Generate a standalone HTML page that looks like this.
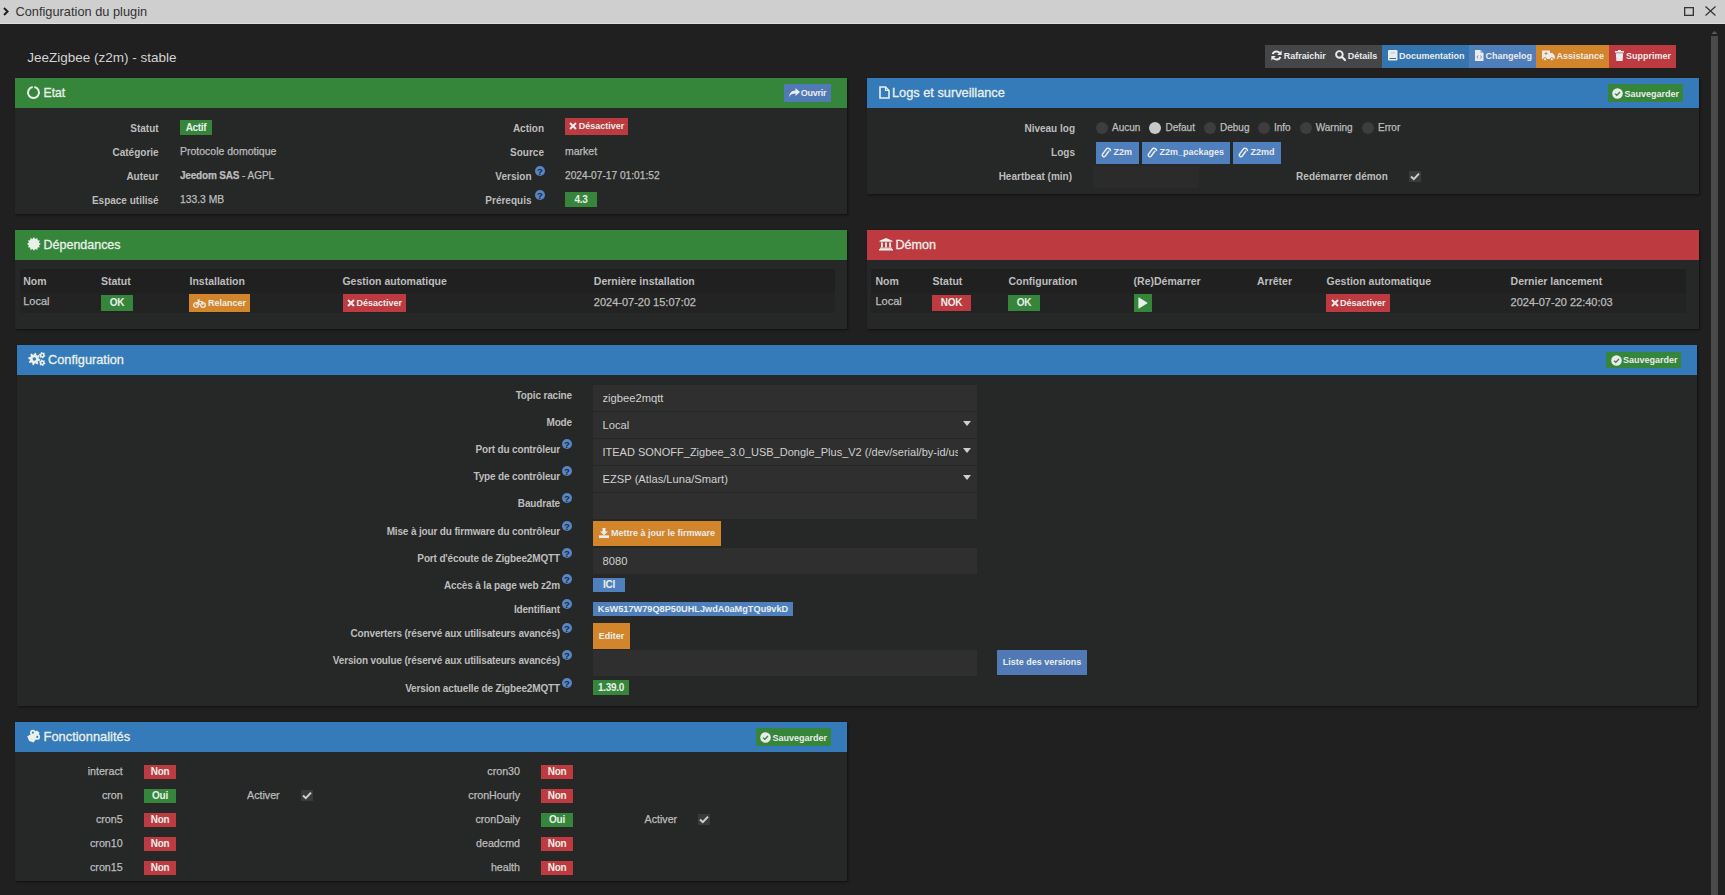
<!DOCTYPE html>
<html><head><meta charset="utf-8">
<style>
*{box-sizing:border-box;margin:0;padding:0}
html,body{width:1725px;height:895px;overflow:hidden;background:#202020;font-family:"Liberation Sans",sans-serif}
.t{position:absolute;white-space:nowrap;line-height:normal}
.r{position:absolute}
svg.r{display:block;overflow:visible}
</style></head><body>
<div class="r" style="left:0px;top:0px;width:1725px;height:23px;background:#cfcfcf;"></div>
<div class="r" style="left:0px;top:23px;width:1725px;height:1px;background:#dedede;"></div>
<svg class="r" style="left:3px;top:7px" width="6" height="9" viewBox="0 0 6 9"><path d="M1 1 L4.6 4.5 L1 8" stroke="#1e1e1e" stroke-width="1.9" fill="none"/></svg>
<div class="t" style="top:4.00px;font-size:12.8px;color:#333;left:15.5px;">Configuration du plugin</div>
<svg class="r" style="left:1684px;top:7px" width="10" height="9" viewBox="0 0 10 9"><rect x="0.65" y="0.65" width="8.7" height="7.7" stroke="#333" stroke-width="1.3" fill="none"/></svg>
<svg class="r" style="left:1705px;top:6px" width="11" height="10" viewBox="0 0 11 10"><path d="M0.5 0.5 L10.5 9.5 M10.5 0.5 L0.5 9.5" stroke="#333" stroke-width="1.2"/></svg>
<div class="r" style="left:1711px;top:36px;width:7px;height:859px;background:#4a4a4a;"></div>
<svg class="r" style="left:1711px;top:30px" width="7" height="4" viewBox="0 0 7 4"><path d="M0.5 4 L3.5 1 L6.5 4Z" fill="#5a5a5a"/></svg>
<div class="t" style="top:50.00px;font-size:13.5px;color:#d2d2d2;left:27.3px;">JeeZigbee (z2m) - stable</div>
<div class="r" style="left:1265px;top:45px;width:117px;height:23px;background:#454648;"></div>
<div class="r" style="left:1382px;top:45px;width:87px;height:23px;background:#3475b0;"></div>
<div class="r" style="left:1469px;top:45px;width:67px;height:23px;background:#4f7fba;"></div>
<div class="r" style="left:1536px;top:45px;width:73px;height:23px;background:#d3852b;"></div>
<div class="r" style="left:1609px;top:45px;width:67px;height:23px;background:#bc3a40;"></div>
<div class="t" style="top:51.00px;font-size:9px;color:#ebebeb;font-weight:700;left:1283.8px;">Rafraichir</div>
<div class="t" style="top:51.00px;font-size:9px;color:#ebebeb;font-weight:700;left:1347.8px;">Détails</div>
<div class="t" style="top:51.00px;font-size:9px;color:#ebebeb;font-weight:700;left:1399px;">Documentation</div>
<div class="t" style="top:51.00px;font-size:9px;color:#ebebeb;font-weight:700;left:1485.5px;">Changelog</div>
<div class="t" style="top:51.00px;font-size:9px;color:#ebebeb;font-weight:700;left:1556.6px;">Assistance</div>
<div class="t" style="top:51.00px;font-size:9px;color:#ebebeb;font-weight:700;left:1626px;">Supprimer</div>
<svg class="r" style="left:1271px;top:50px" width="11" height="11" viewBox="0 0 11 11"><path d="M9.2 3.6 A4.2 4.2 0 0 0 1.6 4.2" stroke="#ebebeb" stroke-width="1.9" fill="none"/><path d="M10.6 0.6 L10.6 5 L6.2 5Z" fill="#ebebeb"/><path d="M1.8 7.4 A4.2 4.2 0 0 0 9.4 6.8" stroke="#ebebeb" stroke-width="1.9" fill="none"/><path d="M0.4 10.4 L0.4 6 L4.8 6Z" fill="#ebebeb"/></svg>
<svg class="r" style="left:1335px;top:50px" width="11" height="11" viewBox="0 0 11 11"><circle cx="4.4" cy="4.4" r="3.3" stroke="#ebebeb" stroke-width="1.9" fill="none"/><path d="M6.8 6.8 L10 10" stroke="#ebebeb" stroke-width="2.2" stroke-linecap="round"/></svg>
<svg class="r" style="left:1388px;top:50px" width="10" height="11" viewBox="0 0 10 11"><rect x="0" y="0" width="9.5" height="10.5" rx="1" fill="#ebebeb"/><rect x="1.5" y="8" width="6.5" height="1" fill="#3475b0"/><rect x="3" y="2.5" width="4" height="0.8" fill="#3475b0" opacity=".4"/></svg>
<svg class="r" style="left:1475px;top:50px" width="9" height="11" viewBox="0 0 9 11"><path d="M0 0 H5.5 L8.5 3 V11 H0Z" fill="#ebebeb"/><path d="M5.5 0 V3 H8.5" fill="#4f7fba" opacity=".5"/><path d="M3 5.5 L2 7 L3 8.5 M5.5 5.5 L6.5 7 L5.5 8.5" stroke="#4f7fba" stroke-width=".8" fill="none"/></svg>
<svg class="r" style="left:1542px;top:50px" width="13" height="11" viewBox="0 0 13 11"><path d="M0 0.5 H8 V3 H10.5 L12.8 5.8 V9 H0Z" fill="#ebebeb"/><circle cx="3" cy="9.2" r="1.6" fill="#ebebeb" stroke="#d3852b" stroke-width=".9"/><circle cx="9.8" cy="9.2" r="1.6" fill="#ebebeb" stroke="#d3852b" stroke-width=".9"/><path d="M4 2 V5 M2.5 3.5 H5.5" stroke="#d3852b" stroke-width="1"/></svg>
<svg class="r" style="left:1615px;top:50px" width="9" height="11" viewBox="0 0 9 11"><rect x="0" y="1" width="9" height="1.6" fill="#ebebeb"/><rect x="3" y="0" width="3" height="1.5" fill="#ebebeb"/><path d="M0.8 3.2 H8.2 L7.6 11 H1.4Z" fill="#ebebeb"/></svg>
<div class="r" style="left:15px;top:78px;width:832px;height:136px;background:#262727;box-shadow:1px 1px 2px rgba(0,0,0,.5)"></div>
<div class="r" style="left:15px;top:78px;width:832px;height:30px;background:#35853b;"></div>
<div class="r" style="left:867px;top:78px;width:832px;height:116px;background:#262727;box-shadow:1px 1px 2px rgba(0,0,0,.5)"></div>
<div class="r" style="left:867px;top:78px;width:832px;height:30px;background:#357ab9;"></div>
<div class="r" style="left:15px;top:230px;width:832px;height:99px;background:#262727;box-shadow:1px 1px 2px rgba(0,0,0,.5)"></div>
<div class="r" style="left:15px;top:230px;width:832px;height:30px;background:#35853b;"></div>
<div class="r" style="left:867px;top:230px;width:832px;height:99px;background:#262727;box-shadow:1px 1px 2px rgba(0,0,0,.5)"></div>
<div class="r" style="left:867px;top:230px;width:832px;height:30px;background:#bc3a40;"></div>
<div class="r" style="left:17px;top:345px;width:1680px;height:361px;background:#262727;box-shadow:1px 1px 2px rgba(0,0,0,.5)"></div>
<div class="r" style="left:17px;top:345px;width:1680px;height:30px;background:#357ab9;"></div>
<div class="r" style="left:15px;top:722px;width:832px;height:159px;background:#262727;box-shadow:1px 1px 2px rgba(0,0,0,.5)"></div>
<div class="r" style="left:15px;top:722px;width:832px;height:30px;background:#357ab9;"></div>
<div class="t" style="top:86.00px;font-size:12.2px;color:#e9f0ea;left:43.5px;-webkit-text-stroke:0.3px #e9f0ea">Etat</div>
<svg class="r" style="left:27px;top:86px" width="13" height="13" viewBox="0 0 13 13"><path d="M7.3 1.05 A5.5 5.5 0 1 1 5.7 1.05" stroke="#e9f0ea" stroke-width="2" fill="none"/></svg>
<div class="r" style="left:784px;top:84px;width:47px;height:18px;background:#5079b5;"></div>
<svg class="r" style="left:789px;top:88px" width="11" height="9" viewBox="0 0 11 9"><path d="M6.5 0 L11 4 L6.5 8 V5.6 C3.5 5.6 1.5 6.5 0 9 C0.3 5 2.5 2.6 6.5 2.4Z" fill="#ebebeb"/></svg>
<div class="t" style="top:88.00px;font-size:9px;color:#ebebeb;font-weight:700;letter-spacing:-0.25px;left:800.8px;">Ouvrir</div>
<div class="t" style="top:123.00px;font-size:10px;color:#bdbdbd;font-weight:700;right:1566.4px;">Statut</div>
<div class="t" style="top:147.00px;font-size:10px;color:#bdbdbd;font-weight:700;right:1566.4px;">Catégorie</div>
<div class="t" style="top:171.00px;font-size:10px;color:#bdbdbd;font-weight:700;right:1566.4px;">Auteur</div>
<div class="t" style="top:195.00px;font-size:10px;color:#bdbdbd;font-weight:700;right:1566.4px;">Espace utilisé</div>
<div class="r" style="left:180px;top:120px;width:32px;height:15px;background:#35853b;"></div>
<div class="t" style="left:180px;width:32px;text-align:center;top:122px;font-size:10px;font-weight:700;color:#e9f0ea;letter-spacing:-0.3px;">Actif</div>
<div class="t" style="top:145.00px;font-size:10.5px;color:#bcbcbc;-webkit-text-stroke:0.25px #bcbcbc;left:180px;">Protocole domotique</div>
<div class="t" style="top:170.00px;font-size:10px;color:#bcbcbc;-webkit-text-stroke:0.25px #bcbcbc;left:180px;"><b style="letter-spacing:-0.2px">Jeedom SAS</b> - AGPL</div>
<div class="t" style="top:194.00px;font-size:10.3px;color:#bcbcbc;-webkit-text-stroke:0.25px #bcbcbc;left:180px;">133.3 MB</div>
<div class="t" style="top:123.00px;font-size:10px;color:#bdbdbd;font-weight:700;right:1181px;">Action</div>
<div class="t" style="top:147.00px;font-size:10px;color:#bdbdbd;font-weight:700;right:1181px;">Source</div>
<div class="t" style="top:171.00px;font-size:10px;color:#bdbdbd;font-weight:700;right:1193.5px;">Version</div>
<div class="t" style="top:195.00px;font-size:10px;color:#bdbdbd;font-weight:700;right:1193.5px;">Prérequis</div>
<svg class="r" style="left:535px;top:166px" width="10" height="10" viewBox="0 0 10 10"><circle cx="5" cy="5" r="5" fill="#5786c2"/><text x="5" y="8.5" text-anchor="middle" font-family="Liberation Sans" font-weight="bold" font-size="9.5" fill="#1c2a3e">?</text></svg>
<svg class="r" style="left:535px;top:190px" width="10" height="10" viewBox="0 0 10 10"><circle cx="5" cy="5" r="5" fill="#5786c2"/><text x="5" y="8.5" text-anchor="middle" font-family="Liberation Sans" font-weight="bold" font-size="9.5" fill="#1c2a3e">?</text></svg>
<div class="r" style="left:565px;top:118px;width:63px;height:17px;background:#bc3a40;"></div>
<div class="t" style="left:578.8px;top:121px;font-size:9px;font-weight:700;color:#e9f0ea;">Désactiver</div>
<svg class="r" style="left:569px;top:121.5px" width="8" height="8" viewBox="0 0 8 8"><path d="M1 1 L7 7 M7 1 L1 7" stroke="#ebebeb" stroke-width="2.1"/></svg>
<div class="t" style="top:145.00px;font-size:10.5px;color:#bcbcbc;-webkit-text-stroke:0.25px #bcbcbc;left:565px;">market</div>
<div class="t" style="top:170.00px;font-size:10.2px;color:#bcbcbc;-webkit-text-stroke:0.25px #bcbcbc;left:565px;">2024-07-17 01:01:52</div>
<div class="r" style="left:565px;top:192px;width:32px;height:15px;background:#35853b;"></div>
<div class="t" style="left:565px;width:32px;text-align:center;top:194px;font-size:10px;font-weight:700;color:#e9f0ea;letter-spacing:-0.3px;">4.3</div>
<div class="t" style="top:85.00px;font-size:12.78px;color:#e9f0ea;left:892px;-webkit-text-stroke:0.3px #e9f0ea">Logs et surveillance</div>
<svg class="r" style="left:879px;top:86px" width="11" height="13" viewBox="0 0 11 13"><path d="M1 1 H6.5 L10 4.5 V12 H1Z" stroke="#e9f0ea" stroke-width="1.6" fill="none"/><path d="M6.5 1 V4.5 H10" stroke="#e9f0ea" stroke-width="1.2" fill="none"/></svg>
<div class="r" style="left:1608px;top:84px;width:75px;height:18px;background:#35853b;"></div>
<svg class="r" style="left:1612px;top:87.5px" width="11" height="11" viewBox="0 0 11 11"><circle cx="5.5" cy="5.5" r="5.3" fill="#ebebeb"/><path d="M3 5.6 L4.8 7.3 L8 4" stroke="#35853b" stroke-width="1.3" fill="none"/></svg>
<div class="t" style="top:89.00px;font-size:9px;color:#ebebeb;font-weight:700;left:1624.6px;">Sauvegarder</div>
<div class="t" style="top:123.00px;font-size:10px;color:#bdbdbd;font-weight:700;right:650px;">Niveau log</div>
<div class="t" style="top:147.00px;font-size:10px;color:#bdbdbd;font-weight:700;right:650px;">Logs</div>
<div class="t" style="top:171.00px;font-size:10px;color:#bdbdbd;font-weight:700;right:653px;">Heartbeat (min)</div>
<svg class="r" style="left:1096px;top:122px" width="12" height="12" viewBox="0 0 12 12"><circle cx="6" cy="6" r="6" fill="#3d3d3d"/></svg>
<div class="t" style="top:122.00px;font-size:10px;color:#bcbcbc;-webkit-text-stroke:0.25px #bcbcbc;left:1112px;">Aucun</div>
<svg class="r" style="left:1149px;top:122px" width="12" height="12" viewBox="0 0 12 12"><circle cx="6" cy="6" r="6" fill="#c8c8c8"/></svg>
<div class="t" style="top:122.00px;font-size:10px;color:#bcbcbc;-webkit-text-stroke:0.25px #bcbcbc;left:1165.5px;">Defaut</div>
<svg class="r" style="left:1204px;top:122px" width="12" height="12" viewBox="0 0 12 12"><circle cx="6" cy="6" r="6" fill="#3d3d3d"/></svg>
<div class="t" style="top:122.00px;font-size:10px;color:#bcbcbc;-webkit-text-stroke:0.25px #bcbcbc;left:1220px;">Debug</div>
<svg class="r" style="left:1258px;top:122px" width="12" height="12" viewBox="0 0 12 12"><circle cx="6" cy="6" r="6" fill="#3d3d3d"/></svg>
<div class="t" style="top:122.00px;font-size:10px;color:#bcbcbc;-webkit-text-stroke:0.25px #bcbcbc;left:1274px;">Info</div>
<svg class="r" style="left:1300px;top:122px" width="12" height="12" viewBox="0 0 12 12"><circle cx="6" cy="6" r="6" fill="#3d3d3d"/></svg>
<div class="t" style="top:122.00px;font-size:10px;color:#bcbcbc;-webkit-text-stroke:0.25px #bcbcbc;left:1315.7px;">Warning</div>
<svg class="r" style="left:1362px;top:122px" width="12" height="12" viewBox="0 0 12 12"><circle cx="6" cy="6" r="6" fill="#3d3d3d"/></svg>
<div class="t" style="top:122.00px;font-size:10px;color:#bcbcbc;-webkit-text-stroke:0.25px #bcbcbc;left:1378px;">Error</div>
<div class="r" style="left:1096px;top:142px;width:43px;height:22px;background:#4f7fbd;"></div>
<svg class="r" style="left:1102px;top:147px" width="9" height="11" viewBox="0 0 9 11"><path d="M7.6 3.2 L3.6 8.8 A1.7 1.7 0 0 1 0.9 6.9 L5.2 1 A2.6 2.6 0 0 1 9 3.6" stroke="#ebebeb" stroke-width="1.5" fill="none" transform="translate(-0.5,0.5)"/></svg>
<div class="t" style="top:147.00px;font-size:9px;color:#ebebeb;font-weight:700;left:1113.5px;">Z2m</div>
<div class="r" style="left:1142px;top:142px;width:88px;height:22px;background:#4f7fbd;"></div>
<svg class="r" style="left:1148px;top:147px" width="9" height="11" viewBox="0 0 9 11"><path d="M7.6 3.2 L3.6 8.8 A1.7 1.7 0 0 1 0.9 6.9 L5.2 1 A2.6 2.6 0 0 1 9 3.6" stroke="#ebebeb" stroke-width="1.5" fill="none" transform="translate(-0.5,0.5)"/></svg>
<div class="t" style="top:147.00px;font-size:9px;color:#ebebeb;font-weight:700;left:1159.5px;">Z2m_packages</div>
<div class="r" style="left:1233px;top:142px;width:48px;height:22px;background:#4f7fbd;"></div>
<svg class="r" style="left:1239px;top:147px" width="9" height="11" viewBox="0 0 9 11"><path d="M7.6 3.2 L3.6 8.8 A1.7 1.7 0 0 1 0.9 6.9 L5.2 1 A2.6 2.6 0 0 1 9 3.6" stroke="#ebebeb" stroke-width="1.5" fill="none" transform="translate(-0.5,0.5)"/></svg>
<div class="t" style="top:147.00px;font-size:9px;color:#ebebeb;font-weight:700;left:1250.5px;">Z2md</div>
<div class="r" style="left:1093px;top:166px;width:106px;height:22px;background:#2b2b2b;"></div>
<div class="t" style="top:171.00px;font-size:10px;color:#bdbdbd;font-weight:700;right:337.20000000000005px;">Redémarrer démon</div>
<svg class="r" style="left:1409px;top:171px" width="12" height="11" viewBox="0 0 12 11"><rect x="0" y="0" width="12" height="11" fill="#3a3a3a"/><path d="M2 5.6 L4.8 8.2 L10 2.6" stroke="#cfcfcf" stroke-width="2" fill="none"/></svg>
<div class="t" style="top:238.00px;font-size:12.47px;color:#e9f0ea;left:43.6px;-webkit-text-stroke:0.3px #e9f0ea">Dépendances</div>
<svg class="r" style="left:27px;top:237.2px" width="14" height="14" viewBox="0 0 14 14"><polygon points="13.80,6.90 11.92,8.25 12.88,10.35 10.58,10.58 10.35,12.88 8.25,11.92 6.90,13.80 5.55,11.92 3.45,12.88 3.22,10.58 0.92,10.35 1.88,8.25 0.00,6.90 1.88,5.55 0.92,3.45 3.22,3.22 3.45,0.92 5.55,1.88 6.90,0.00 8.25,1.88 10.35,0.92 10.58,3.22 12.88,3.45 11.92,5.55" fill="#e9f0ea"/></svg>
<div class="r" style="left:20px;top:269px;width:815px;height:24px;background:#202021;"></div>
<div class="r" style="left:20px;top:293px;width:815px;height:20px;background:#232324;"></div>
<div class="t" style="top:275.00px;font-size:10.5px;color:#bdbdbd;font-weight:700;left:23.2px;">Nom</div>
<div class="t" style="top:275.00px;font-size:10.5px;color:#bdbdbd;font-weight:700;left:101px;">Statut</div>
<div class="t" style="top:275.00px;font-size:10.5px;color:#bdbdbd;font-weight:700;left:189.5px;">Installation</div>
<div class="t" style="top:275.00px;font-size:10.5px;color:#bdbdbd;font-weight:700;left:342.4px;">Gestion automatique</div>
<div class="t" style="top:275.00px;font-size:10.5px;color:#bdbdbd;font-weight:700;left:593.8px;">Dernière installation</div>
<div class="t" style="top:295.00px;font-size:11px;color:#bcbcbc;-webkit-text-stroke:0.25px #bcbcbc;left:23.2px;">Local</div>
<div class="r" style="left:101px;top:295px;width:32px;height:16px;background:#35853b;"></div>
<div class="t" style="left:101px;width:32px;text-align:center;top:297px;font-size:10px;font-weight:700;color:#e9f0ea;letter-spacing:-0.3px;">OK</div>
<div class="r" style="left:189px;top:294px;width:61px;height:18px;background:#d3852b;"></div>
<div class="t" style="left:208px;top:298px;font-size:9px;font-weight:700;color:#e9f0ea;">Relancer</div>
<svg class="r" style="left:193px;top:298.5px" width="13" height="9" viewBox="0 0 13 9"><circle cx="3" cy="6" r="2.3" stroke="#ebebeb" stroke-width="1.3" fill="none"/><circle cx="10" cy="6" r="2.3" stroke="#ebebeb" stroke-width="1.3" fill="none"/><path d="M3 6 L5.5 2.5 H9 L10 6 M6.5 6 L5 1 H7" stroke="#ebebeb" stroke-width="1.2" fill="none"/></svg>
<div class="r" style="left:343px;top:294px;width:63px;height:18px;background:#bc3a40;"></div>
<div class="t" style="left:356.5px;top:298px;font-size:9px;font-weight:700;color:#e9f0ea;">Désactiver</div>
<svg class="r" style="left:347px;top:299px" width="8" height="8" viewBox="0 0 8 8"><path d="M1 1 L7 7 M7 1 L1 7" stroke="#ebebeb" stroke-width="2.1"/></svg>
<div class="t" style="top:296.00px;font-size:11px;color:#bcbcbc;-webkit-text-stroke:0.25px #bcbcbc;left:593.8px;">2024-07-20 15:07:02</div>
<div class="t" style="top:238.00px;font-size:12.6px;color:#e9f0ea;left:895.4px;-webkit-text-stroke:0.3px #e9f0ea">Démon</div>
<svg class="r" style="left:879px;top:238px" width="14" height="12.5" viewBox="0 0 14 12.5"><path d="M7 0 L13.5 2.8 V3.8 H0.5 V2.8Z" fill="#e9f0ea"/><rect x="2" y="4.4" width="1.8" height="5" fill="#e9f0ea"/><rect x="6.1" y="4.4" width="1.8" height="5" fill="#e9f0ea"/><rect x="10.2" y="4.4" width="1.8" height="5" fill="#e9f0ea"/><rect x="1" y="9.6" width="12" height="1.2" fill="#e9f0ea"/><rect x="0" y="11" width="14" height="1.5" fill="#e9f0ea"/></svg>
<div class="r" style="left:871px;top:269px;width:815px;height:24px;background:#202021;"></div>
<div class="r" style="left:871px;top:293px;width:815px;height:20px;background:#232324;"></div>
<div class="t" style="top:275.00px;font-size:10.5px;color:#bdbdbd;font-weight:700;left:875.5px;">Nom</div>
<div class="t" style="top:275.00px;font-size:10.5px;color:#bdbdbd;font-weight:700;left:932.6px;">Statut</div>
<div class="t" style="top:275.00px;font-size:10.5px;color:#bdbdbd;font-weight:700;left:1008.4px;">Configuration</div>
<div class="t" style="top:275.00px;font-size:10.5px;color:#bdbdbd;font-weight:700;left:1133.6px;">(Re)Démarrer</div>
<div class="t" style="top:275.00px;font-size:10.5px;color:#bdbdbd;font-weight:700;left:1257px;">Arrêter</div>
<div class="t" style="top:275.00px;font-size:10.5px;color:#bdbdbd;font-weight:700;left:1326.6px;">Gestion automatique</div>
<div class="t" style="top:275.00px;font-size:10.5px;color:#bdbdbd;font-weight:700;left:1510.6px;">Dernier lancement</div>
<div class="t" style="top:295.00px;font-size:11px;color:#bcbcbc;-webkit-text-stroke:0.25px #bcbcbc;left:875.5px;">Local</div>
<div class="r" style="left:932px;top:295px;width:39px;height:16px;background:#bc3a40;"></div>
<div class="t" style="left:932px;width:39px;text-align:center;top:297px;font-size:10px;font-weight:700;color:#e9f0ea;letter-spacing:-0.3px;">NOK</div>
<div class="r" style="left:1008px;top:295px;width:32px;height:16px;background:#35853b;"></div>
<div class="t" style="left:1008px;width:32px;text-align:center;top:297px;font-size:10px;font-weight:700;color:#e9f0ea;letter-spacing:-0.3px;">OK</div>
<div class="r" style="left:1134px;top:294px;width:18px;height:18px;background:#35853b;"></div>
<svg class="r" style="left:1138px;top:297px" width="10" height="12" viewBox="0 0 10 12"><path d="M0.8 0.8 L9.2 6 L0.8 11.2Z" fill="#e9f0ea" stroke="#e9f0ea" stroke-width="0.8" stroke-linejoin="round"/></svg>
<div class="r" style="left:1326px;top:294px;width:64px;height:18px;background:#bc3a40;"></div>
<div class="t" style="left:1340px;top:298px;font-size:9px;font-weight:700;color:#e9f0ea;">Désactiver</div>
<svg class="r" style="left:1330.5px;top:299px" width="8" height="8" viewBox="0 0 8 8"><path d="M1 1 L7 7 M7 1 L1 7" stroke="#ebebeb" stroke-width="2.1"/></svg>
<div class="t" style="top:296.00px;font-size:11px;color:#bcbcbc;-webkit-text-stroke:0.25px #bcbcbc;left:1510.6px;">2024-07-20 22:40:03</div>
<div class="t" style="top:352.00px;font-size:12.77px;color:#e9f0ea;left:48px;-webkit-text-stroke:0.3px #e9f0ea">Configuration</div>
<svg class="r" style="left:28px;top:352px" width="18" height="14" viewBox="0 0 18 14"><polygon points="12.47,7.61 12.23,8.80 10.24,9.10 9.75,9.83 10.23,11.79 9.22,12.47 7.60,11.27 6.74,11.44 5.69,13.17 4.50,12.93 4.20,10.94 3.47,10.45 1.51,10.93 0.83,9.92 2.03,8.30 1.86,7.44 0.13,6.39 0.37,5.20 2.36,4.90 2.85,4.17 2.37,2.21 3.38,1.53 5.00,2.73 5.86,2.56 6.91,0.83 8.10,1.07 8.40,3.06 9.13,3.55 11.09,3.07 11.77,4.08 10.57,5.70 10.74,6.56" fill="#e9f0ea"/><circle cx="6.3" cy="7" r="1.7" fill="#357ab9"/><polygon points="17.47,3.63 17.25,4.46 16.09,4.65 15.65,5.09 15.46,6.25 14.63,6.47 13.89,5.56 13.29,5.40 12.19,5.82 11.58,5.21 12.00,4.11 11.84,3.51 10.93,2.77 11.15,1.94 12.31,1.75 12.75,1.31 12.94,0.15 13.77,-0.07 14.51,0.84 15.11,1.00 16.21,0.58 16.82,1.19 16.40,2.29 16.56,2.89" fill="#e9f0ea"/><circle cx="14.2" cy="3.2" r="0.9" fill="#357ab9"/><polygon points="17.47,11.23 17.25,12.06 16.09,12.25 15.65,12.69 15.46,13.85 14.63,14.07 13.89,13.16 13.29,13.00 12.19,13.42 11.58,12.81 12.00,11.71 11.84,11.11 10.93,10.37 11.15,9.54 12.31,9.35 12.75,8.91 12.94,7.75 13.77,7.53 14.51,8.44 15.11,8.60 16.21,8.18 16.82,8.79 16.40,9.89 16.56,10.49" fill="#e9f0ea"/><circle cx="14.2" cy="10.8" r="0.9" fill="#357ab9"/></svg>
<div class="r" style="left:1606px;top:352px;width:75px;height:16px;background:#35853b;"></div>
<svg class="r" style="left:1610.5px;top:354.5px" width="11" height="11" viewBox="0 0 11 11"><circle cx="5.5" cy="5.5" r="5.3" fill="#ebebeb"/><path d="M3 5.6 L4.8 7.3 L8 4" stroke="#35853b" stroke-width="1.3" fill="none"/></svg>
<div class="t" style="top:355.00px;font-size:9px;color:#ebebeb;font-weight:700;left:1622.9px;">Sauvegarder</div>
<div class="t" style="top:390.00px;font-size:10px;color:#bdbdbd;font-weight:700;letter-spacing:-0.15px;right:1153px;">Topic racine</div>
<div class="t" style="top:417.00px;font-size:10px;color:#bdbdbd;font-weight:700;letter-spacing:-0.15px;right:1153px;">Mode</div>
<div class="t" style="top:444.00px;font-size:10px;color:#bdbdbd;font-weight:700;letter-spacing:-0.15px;right:1165px;">Port du contrôleur</div>
<svg class="r" style="left:562px;top:439px" width="10" height="10" viewBox="0 0 10 10"><circle cx="5" cy="5" r="5" fill="#5786c2"/><text x="5" y="8.5" text-anchor="middle" font-family="Liberation Sans" font-weight="bold" font-size="9.5" fill="#1c2a3e">?</text></svg>
<div class="t" style="top:471.00px;font-size:10px;color:#bdbdbd;font-weight:700;letter-spacing:-0.15px;right:1165px;">Type de contrôleur</div>
<svg class="r" style="left:562px;top:466px" width="10" height="10" viewBox="0 0 10 10"><circle cx="5" cy="5" r="5" fill="#5786c2"/><text x="5" y="8.5" text-anchor="middle" font-family="Liberation Sans" font-weight="bold" font-size="9.5" fill="#1c2a3e">?</text></svg>
<div class="t" style="top:498.00px;font-size:10px;color:#bdbdbd;font-weight:700;letter-spacing:-0.15px;right:1165px;">Baudrate</div>
<svg class="r" style="left:562px;top:493px" width="10" height="10" viewBox="0 0 10 10"><circle cx="5" cy="5" r="5" fill="#5786c2"/><text x="5" y="8.5" text-anchor="middle" font-family="Liberation Sans" font-weight="bold" font-size="9.5" fill="#1c2a3e">?</text></svg>
<div class="t" style="top:526.00px;font-size:10px;color:#bdbdbd;font-weight:700;letter-spacing:-0.15px;right:1165px;">Mise à jour du firmware du contrôleur</div>
<svg class="r" style="left:562px;top:521px" width="10" height="10" viewBox="0 0 10 10"><circle cx="5" cy="5" r="5" fill="#5786c2"/><text x="5" y="8.5" text-anchor="middle" font-family="Liberation Sans" font-weight="bold" font-size="9.5" fill="#1c2a3e">?</text></svg>
<div class="t" style="top:553.00px;font-size:10px;color:#bdbdbd;font-weight:700;letter-spacing:-0.15px;right:1165px;">Port d'écoute de Zigbee2MQTT</div>
<svg class="r" style="left:562px;top:548px" width="10" height="10" viewBox="0 0 10 10"><circle cx="5" cy="5" r="5" fill="#5786c2"/><text x="5" y="8.5" text-anchor="middle" font-family="Liberation Sans" font-weight="bold" font-size="9.5" fill="#1c2a3e">?</text></svg>
<div class="t" style="top:580.00px;font-size:10px;color:#bdbdbd;font-weight:700;letter-spacing:-0.15px;right:1165px;">Accès à la page web z2m</div>
<svg class="r" style="left:562px;top:574px" width="10" height="10" viewBox="0 0 10 10"><circle cx="5" cy="5" r="5" fill="#5786c2"/><text x="5" y="8.5" text-anchor="middle" font-family="Liberation Sans" font-weight="bold" font-size="9.5" fill="#1c2a3e">?</text></svg>
<div class="t" style="top:604.00px;font-size:10px;color:#bdbdbd;font-weight:700;letter-spacing:-0.15px;right:1165px;">Identifiant</div>
<svg class="r" style="left:562px;top:599px" width="10" height="10" viewBox="0 0 10 10"><circle cx="5" cy="5" r="5" fill="#5786c2"/><text x="5" y="8.5" text-anchor="middle" font-family="Liberation Sans" font-weight="bold" font-size="9.5" fill="#1c2a3e">?</text></svg>
<div class="t" style="top:628.00px;font-size:10px;color:#bdbdbd;font-weight:700;letter-spacing:-0.15px;right:1165px;">Converters (réservé aux utilisateurs avancés)</div>
<svg class="r" style="left:562px;top:623px" width="10" height="10" viewBox="0 0 10 10"><circle cx="5" cy="5" r="5" fill="#5786c2"/><text x="5" y="8.5" text-anchor="middle" font-family="Liberation Sans" font-weight="bold" font-size="9.5" fill="#1c2a3e">?</text></svg>
<div class="t" style="top:655.00px;font-size:10px;color:#bdbdbd;font-weight:700;letter-spacing:-0.15px;right:1165px;">Version voulue (réservé aux utilisateurs avancés)</div>
<svg class="r" style="left:562px;top:650px" width="10" height="10" viewBox="0 0 10 10"><circle cx="5" cy="5" r="5" fill="#5786c2"/><text x="5" y="8.5" text-anchor="middle" font-family="Liberation Sans" font-weight="bold" font-size="9.5" fill="#1c2a3e">?</text></svg>
<div class="t" style="top:683.00px;font-size:10px;color:#bdbdbd;font-weight:700;letter-spacing:-0.15px;right:1165px;">Version actuelle de Zigbee2MQTT</div>
<svg class="r" style="left:562px;top:678px" width="10" height="10" viewBox="0 0 10 10"><circle cx="5" cy="5" r="5" fill="#5786c2"/><text x="5" y="8.5" text-anchor="middle" font-family="Liberation Sans" font-weight="bold" font-size="9.5" fill="#1c2a3e">?</text></svg>
<div class="r" style="left:593px;top:385px;width:384px;height:26px;background:#2f2f2f;"></div>
<div class="t" style="left:602.5px;top:391.86px;font-size:11.2px;color:#cfcfcf;width:355px;overflow:hidden">zigbee2mqtt</div>
<div class="r" style="left:593px;top:412px;width:384px;height:26px;background:#2f2f2f;"></div>
<div class="t" style="left:602.5px;top:418.86px;font-size:11.2px;color:#cfcfcf;width:355px;overflow:hidden">Local</div>
<svg class="r" style="left:963px;top:421px" width="8" height="5" viewBox="0 0 8 5"><path d="M0 0 L8 0 L4 5Z" fill="#cfcfcf"/></svg>
<div class="r" style="left:593px;top:439px;width:384px;height:26px;background:#2f2f2f;"></div>
<div class="t" style="left:602.5px;top:446.05px;font-size:11px;color:#cfcfcf;width:355px;overflow:hidden">ITEAD SONOFF_Zigbee_3.0_USB_Dongle_Plus_V2 (/dev/serial/by-id/usb-ITEAD</div>
<svg class="r" style="left:963px;top:448px" width="8" height="5" viewBox="0 0 8 5"><path d="M0 0 L8 0 L4 5Z" fill="#cfcfcf"/></svg>
<div class="r" style="left:593px;top:466px;width:384px;height:26px;background:#2f2f2f;"></div>
<div class="t" style="left:602.5px;top:472.86px;font-size:11.2px;color:#cfcfcf;width:355px;overflow:hidden">EZSP (Atlas/Luna/Smart)</div>
<svg class="r" style="left:963px;top:475px" width="8" height="5" viewBox="0 0 8 5"><path d="M0 0 L8 0 L4 5Z" fill="#cfcfcf"/></svg>
<div class="r" style="left:593px;top:493px;width:384px;height:26px;background:#2f2f2f;"></div>
<div class="r" style="left:593px;top:521px;width:128px;height:25px;background:#d3852b;"></div>
<svg class="r" style="left:598.5px;top:527.5px" width="10" height="10" viewBox="0 0 10 10"><path d="M3.5 0 H6.5 V3.5 H9 L5 7.2 L1 3.5 H3.5Z" fill="#ebebeb"/><rect x="0" y="7.3" width="10" height="2.7" fill="#ebebeb"/></svg>
<div class="t" style="top:528.00px;font-size:9px;color:#ebebeb;font-weight:700;left:611px;">Mettre à jour le firmware</div>
<div class="r" style="left:593px;top:548px;width:384px;height:26px;background:#2f2f2f;"></div>
<div class="t" style="left:602.5px;top:554.86px;font-size:11.2px;color:#cfcfcf;width:355px;overflow:hidden">8080</div>
<div class="r" style="left:593px;top:578px;width:32px;height:14px;background:#4f7fbd;"></div>
<div class="t" style="left:593px;width:32px;text-align:center;top:579px;font-size:10px;font-weight:700;color:#e9f0ea;letter-spacing:-0.3px;">ICI</div>
<div class="r" style="left:593px;top:602px;width:200px;height:14px;background:#4f7fbd;"></div>
<div class="t" style="left:593px;width:200px;text-align:center;top:604px;font-size:9.2px;font-weight:700;color:#e9f0ea;">KsW517W79Q8P50UHLJwdA0aMgTQu9vkD</div>
<div class="r" style="left:593px;top:623px;width:37px;height:26px;background:#d3852b;"></div>
<div class="t" style="left:593px;width:37px;text-align:center;top:631px;font-size:9px;font-weight:700;color:#e9f0ea;">Editer</div>
<div class="r" style="left:593px;top:650px;width:384px;height:26px;background:#2f2f2f;"></div>
<div class="r" style="left:997px;top:650px;width:90px;height:25px;background:#5079b5;"></div>
<div class="t" style="left:997px;width:90px;text-align:center;top:657px;font-size:9px;font-weight:700;color:#e9f0ea;">Liste des versions</div>
<div class="r" style="left:593px;top:680px;width:36px;height:15px;background:#35853b;"></div>
<div class="t" style="left:593px;width:36px;text-align:center;top:682px;font-size:10px;font-weight:700;color:#e9f0ea;letter-spacing:-0.3px;">1.39.0</div>
<div class="t" style="top:729.00px;font-size:12.86px;color:#e9f0ea;left:43.6px;-webkit-text-stroke:0.3px #e9f0ea">Fonctionnalités</div>
<svg class="r" style="left:25px;top:727px" width="18" height="18" viewBox="0 0 18 18"><polygon points="2.2,9.4 6.5,6.8 11.8,3.6 14.6,5.8 12,10.5 8.7,15.6 4.2,14" fill="#e9f0ea"/><circle cx="7.85" cy="5.6" r="2.8" fill="#e9f0ea"/><circle cx="7.85" cy="5.6" r="1.05" fill="#357ab9"/><circle cx="12.3" cy="9.9" r="2.8" fill="#e9f0ea"/><circle cx="12.3" cy="9.9" r="1.05" fill="#357ab9"/></svg>
<div class="r" style="left:756px;top:728px;width:75px;height:18px;background:#35853b;"></div>
<svg class="r" style="left:760px;top:731.5px" width="11" height="11" viewBox="0 0 11 11"><circle cx="5.5" cy="5.5" r="5.3" fill="#ebebeb"/><path d="M3 5.6 L4.8 7.3 L8 4" stroke="#35853b" stroke-width="1.3" fill="none"/></svg>
<div class="t" style="top:733.00px;font-size:9px;color:#ebebeb;font-weight:700;left:772.5px;">Sauvegarder</div>
<div class="t" style="top:765.00px;font-size:10.7px;color:#bcbcbc;-webkit-text-stroke:0.25px #bcbcbc;right:1602.3px;">interact</div>
<div class="r" style="left:144px;top:765px;width:32px;height:14px;background:#bc3a40;"></div>
<div class="t" style="left:144px;width:32px;text-align:center;top:766px;font-size:10px;font-weight:700;color:#e9f0ea;letter-spacing:-0.3px;">Non</div>
<div class="t" style="top:765.00px;font-size:10.7px;color:#bcbcbc;-webkit-text-stroke:0.25px #bcbcbc;right:1205px;">cron30</div>
<div class="r" style="left:541px;top:765px;width:32px;height:14px;background:#bc3a40;"></div>
<div class="t" style="left:541px;width:32px;text-align:center;top:766px;font-size:10px;font-weight:700;color:#e9f0ea;letter-spacing:-0.3px;">Non</div>
<div class="t" style="top:789.00px;font-size:10.7px;color:#bcbcbc;-webkit-text-stroke:0.25px #bcbcbc;right:1602.3px;">cron</div>
<div class="r" style="left:144px;top:789px;width:32px;height:14px;background:#35853b;"></div>
<div class="t" style="left:144px;width:32px;text-align:center;top:790px;font-size:10px;font-weight:700;color:#e9f0ea;letter-spacing:-0.3px;">Oui</div>
<div class="t" style="top:789.00px;font-size:10.7px;color:#bcbcbc;-webkit-text-stroke:0.25px #bcbcbc;left:247px;">Activer</div>
<svg class="r" style="left:300.5px;top:790px" width="12" height="11" viewBox="0 0 12 11"><rect x="0" y="0" width="12" height="11" fill="#3a3a3a"/><path d="M2 5.6 L4.8 8.2 L10 2.6" stroke="#cfcfcf" stroke-width="2" fill="none"/></svg>
<div class="t" style="top:789.00px;font-size:10.7px;color:#bcbcbc;-webkit-text-stroke:0.25px #bcbcbc;right:1205px;">cronHourly</div>
<div class="r" style="left:541px;top:789px;width:32px;height:14px;background:#bc3a40;"></div>
<div class="t" style="left:541px;width:32px;text-align:center;top:790px;font-size:10px;font-weight:700;color:#e9f0ea;letter-spacing:-0.3px;">Non</div>
<div class="t" style="top:813.00px;font-size:10.7px;color:#bcbcbc;-webkit-text-stroke:0.25px #bcbcbc;right:1602.3px;">cron5</div>
<div class="r" style="left:144px;top:813px;width:32px;height:14px;background:#bc3a40;"></div>
<div class="t" style="left:144px;width:32px;text-align:center;top:814px;font-size:10px;font-weight:700;color:#e9f0ea;letter-spacing:-0.3px;">Non</div>
<div class="t" style="top:813.00px;font-size:10.7px;color:#bcbcbc;-webkit-text-stroke:0.25px #bcbcbc;right:1205px;">cronDaily</div>
<div class="r" style="left:541px;top:813px;width:32px;height:14px;background:#35853b;"></div>
<div class="t" style="left:541px;width:32px;text-align:center;top:814px;font-size:10px;font-weight:700;color:#e9f0ea;letter-spacing:-0.3px;">Oui</div>
<div class="t" style="top:813.00px;font-size:10.7px;color:#bcbcbc;-webkit-text-stroke:0.25px #bcbcbc;left:644.5px;">Activer</div>
<svg class="r" style="left:698px;top:814px" width="12" height="11" viewBox="0 0 12 11"><rect x="0" y="0" width="12" height="11" fill="#3a3a3a"/><path d="M2 5.6 L4.8 8.2 L10 2.6" stroke="#cfcfcf" stroke-width="2" fill="none"/></svg>
<div class="t" style="top:837.00px;font-size:10.7px;color:#bcbcbc;-webkit-text-stroke:0.25px #bcbcbc;right:1602.3px;">cron10</div>
<div class="r" style="left:144px;top:837px;width:32px;height:14px;background:#bc3a40;"></div>
<div class="t" style="left:144px;width:32px;text-align:center;top:838px;font-size:10px;font-weight:700;color:#e9f0ea;letter-spacing:-0.3px;">Non</div>
<div class="t" style="top:837.00px;font-size:10.7px;color:#bcbcbc;-webkit-text-stroke:0.25px #bcbcbc;right:1205px;">deadcmd</div>
<div class="r" style="left:541px;top:837px;width:32px;height:14px;background:#bc3a40;"></div>
<div class="t" style="left:541px;width:32px;text-align:center;top:838px;font-size:10px;font-weight:700;color:#e9f0ea;letter-spacing:-0.3px;">Non</div>
<div class="t" style="top:861.00px;font-size:10.7px;color:#bcbcbc;-webkit-text-stroke:0.25px #bcbcbc;right:1602.3px;">cron15</div>
<div class="r" style="left:144px;top:861px;width:32px;height:14px;background:#bc3a40;"></div>
<div class="t" style="left:144px;width:32px;text-align:center;top:862px;font-size:10px;font-weight:700;color:#e9f0ea;letter-spacing:-0.3px;">Non</div>
<div class="t" style="top:861.00px;font-size:10.7px;color:#bcbcbc;-webkit-text-stroke:0.25px #bcbcbc;right:1205px;">health</div>
<div class="r" style="left:541px;top:861px;width:32px;height:14px;background:#bc3a40;"></div>
<div class="t" style="left:541px;width:32px;text-align:center;top:862px;font-size:10px;font-weight:700;color:#e9f0ea;letter-spacing:-0.3px;">Non</div>
</body></html>
